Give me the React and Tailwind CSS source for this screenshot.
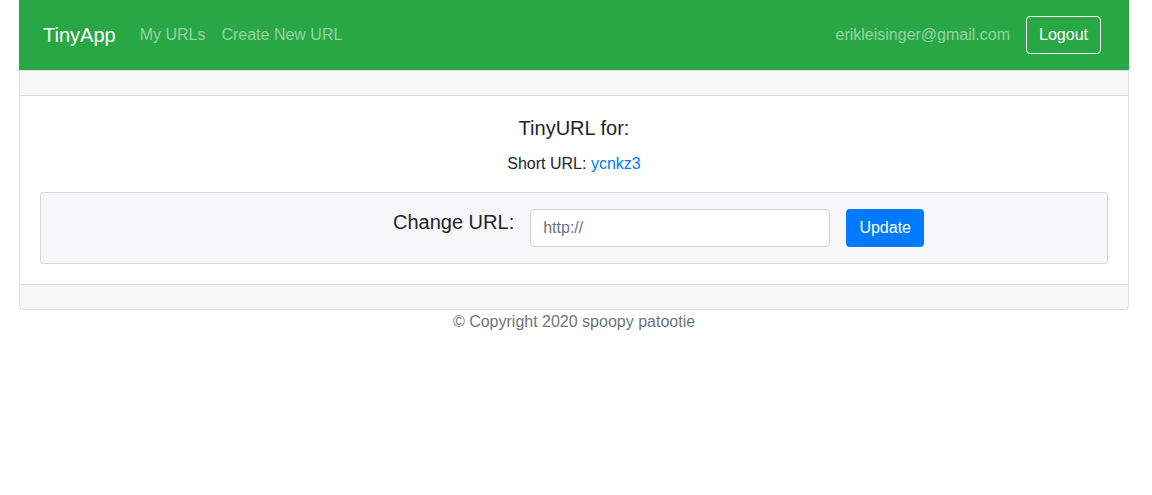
import React from "react";

export default function App() {
  return (
    <div className="min-h-[495px] bg-white text-[#212529]" style={{ fontFamily: '"Liberation Sans", Arial, sans-serif' }}>
      <div className="ml-[19px] w-[1110px]">
        <nav className="flex h-[70px] items-center bg-[#28a745] pl-6 pr-[28px]">
          <span className="mr-4 text-[20px] leading-[30px] text-white">TinyApp</span>
          <a className="px-2 text-[16px] text-white/50">My URLs</a>
          <a className="px-2 text-[16px] text-white/50">Create New URL</a>
          <div className="ml-auto flex items-center">
            <span className="px-2 text-[16px] text-white/50">erikleisinger@gmail.com</span>
            <button className="ml-2 h-[38px] w-[75px] rounded-[4px] border border-white text-[16px] text-white">Logout</button>
          </div>
        </nav>
        <div className="rounded-b-[4px] border border-t border-black/[0.125]">
          <div className="h-[25px] border-b border-black/[0.125] bg-black/[0.03]"></div>
          <div className="px-5 pb-5 pt-5 text-center">
            <h5 className="mb-[12px] text-[20px] leading-6">TinyURL for:</h5>
            <p className="mb-[16px] text-[16px] leading-6">
              Short URL: <a className="text-[#007bff]">ycnkz3</a>
            </p>
            <div className="flex h-[72px] items-start rounded-[4px] border border-black/[0.125] bg-[#f7f7f9] pl-[352px] pt-4 text-left">
              <label className="mr-4 mt-[1px] text-[20px] leading-6">Change URL:</label>
              <input
                placeholder="http://"
                className="h-[38px] w-[300px] rounded-[4px] border border-[#ced4da] bg-white px-3 text-[16px] text-[#495057] outline-none placeholder:text-[#6c757d]"
              />
              <button className="ml-4 h-[38px] w-[78px] rounded-[4px] bg-[#007bff] text-[16px] text-white">Update</button>
            </div>
          </div>
          <div className="h-[25px] border-t border-black/[0.125] bg-black/[0.03]"></div>
        </div>
        <p className="text-center text-[16px] leading-6 text-[#6c757d]">© Copyright 2020 spoopy patootie</p>
      </div>
    </div>
  );
}
